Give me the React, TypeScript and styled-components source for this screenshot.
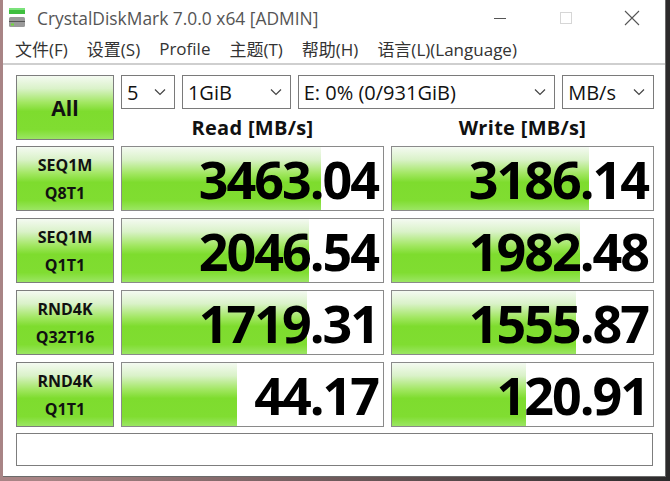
import React from 'react';
import styled, { createGlobalStyle } from 'styled-components';

interface Result {
  line1: string;
  line2: string;
  read: string;
  readFill: number;
  write: string;
  writeFill: number;
}

const results: Result[] = [
  { line1: 'SEQ1M', line2: 'Q8T1', read: '3463.04', readFill: 199, write: '3186.14', writeFill: 197 },
  { line1: 'SEQ1M', line2: 'Q1T1', read: '2046.54', readFill: 187, write: '1982.48', writeFill: 188 },
  { line1: 'RND4K', line2: 'Q32T16', read: '1719.31', readFill: 185, write: '1555.87', writeFill: 184 },
  { line1: 'RND4K', line2: 'Q1T1', read: '44.17', readFill: 115, write: '120.91', writeFill: 134 },
];

const GlobalStyle = createGlobalStyle`
  html, body {
    margin: 0;
    padding: 0;
    width: 670px;
    height: 481px;
    overflow: hidden;
    background: linear-gradient(to right, #a88485 0px, #a88485 40px, #3b3536 600px, #2c2a2b 100%);
  }
  * { box-sizing: border-box; }
`;

const green = `linear-gradient(to bottom, #f4faf1 0%, #daf2c9 20%, #a2e762 42%, #7edc2e 56%, #80dd31 85%, #9be663 100%)`;

//창 전체
const Window = styled.div`
  margin-left: 3px;
  width: 663px;
  height: 477px;
  background: #fff;
  border-right: 1px solid #6b6b6b;
  border-bottom: 1px solid #6b6b6b;
  display: flex;
  flex-direction: column;
  font-family: 'Open Sans', 'Noto Sans CJK SC', sans-serif;
`;

const TitleBar = styled.div`
  height: 35px;
  display: flex;
  align-items: center;
  padding-left: 5px;
`;

const AppIcon = styled.svg`
  width: 18px;
  height: 22px;
  margin-right: 11px;
  margin-top: 1px;
`;

const TitleText = styled.span`
  font-size: 17.4px;
  color: #555;
  flex: 1;
`;

const CaptionButton = styled.div`
  width: 66px;
  height: 35px;
  display: flex;
  align-items: center;
  justify-content: center;
`;

//메뉴 바
const MenuBar = styled.div`
  height: 27px;
  display: flex;
  align-items: center;
  padding-left: 8px;
  border-bottom: 2px solid #cfcfcf;
  box-sizing: content-box;
  padding-bottom: 1px;
`;

const MenuItem = styled.span`
  font-size: 17px;
  color: #333;
  padding: 0 4px;
  margin-right: 11px;
`;

const Client = styled.div`
  padding: 10px 12px 0 13px;
  display: flex;
  flex-direction: column;
  gap: 6px;
`;

const Grid = styled.div`
  display: grid;
  grid-template-columns: 98px 263px 263px;
  grid-auto-rows: 65px;
  column-gap: 7px;
  row-gap: 7px;
`;

const TopArea = styled.div`
  display: grid;
  grid-template-columns: 98px 263px 263px;
  grid-template-rows: 34px 31px;
  column-gap: 7px;
`;

const GreenButton = styled.div<{ $big?: boolean }>`
  border: 1px solid #7d7d7d;
  background: ${green};
  display: flex;
  flex-direction: column;
  align-items: center;
  justify-content: center;
  font-weight: 700;
  color: #111;
  font-size: ${p => (p.$big ? '21px' : '16px')};
  line-height: 28px;
  grid-row: ${p => (p.$big ? 'span 2' : 'auto')};
`;

const ComboRow = styled.div`
  grid-column: span 2;
  display: flex;
  gap: 7px;
`;

const Combo = styled.div<{ $w: number }>`
  width: ${p => p.$w}px;
  height: 34px;
  border: 1px solid #7a7a7a;
  background: #fff;
  display: flex;
  align-items: center;
  justify-content: space-between;
  padding: 0 8px 0 5px;
  font-size: 20px;
  color: #111;
`;

const Chevron = () => (
  <svg width="12" height="8" viewBox="0 0 12 8">
    <path d="M1 1.5 L6 6.5 L11 1.5" fill="none" stroke="#444" strokeWidth="1.2" />
  </svg>
);

const Header = styled.div`
  display: flex;
  align-items: center;
  justify-content: center;
  font-weight: 700;
  font-size: 20px;
  color: #111;
  letter-spacing: 0.3px;
  padding-top: 6px;
`;

const ValueCell = styled.div<{ $fill: number }>`
  border: 1px solid #8a8a8a;
  background-color: #fff;
  background-image: ${green};
  background-repeat: no-repeat;
  background-size: ${p => p.$fill}px 100%;
  display: flex;
  align-items: center;
  justify-content: flex-end;
  padding-right: 5px;
  font-weight: 700;
  font-size: 52px;
  letter-spacing: -2px;
  color: #000;
  line-height: 1;
`;

const StatusBar = styled.div`
  height: 33px;
  border: 1px solid #7d7d7d;
  background: #fff;
`;

const App = () => {
  return (
    <>
      <GlobalStyle />
      <Window>
        <TitleBar>
          <AppIcon viewBox="0 0 18 22">
            <rect x="1" y="1" width="16" height="6" fill="#3fbf3f" />
            <rect x="1" y="1" width="16" height="2" fill="#7be27b" />
            <rect x="1" y="10" width="16" height="10" rx="1.5" fill="#9a9a9a" />
            <rect x="1" y="14" width="16" height="1" fill="#555" />
            <rect x="3" y="16.5" width="3" height="2" fill="#6edb3a" />
          </AppIcon>
          <TitleText>CrystalDiskMark 7.0.0 x64 [ADMIN]</TitleText>
          <CaptionButton>
            <svg width="14" height="14" viewBox="0 0 14 14">
              <path d="M1 7.5 H13" stroke="#555" strokeWidth="1" />
            </svg>
          </CaptionButton>
          <CaptionButton>
            <svg width="14" height="14" viewBox="0 0 14 14">
              <rect x="1.5" y="1.5" width="11" height="11" fill="none" stroke="#d6d6d6" strokeWidth="1" />
            </svg>
          </CaptionButton>
          <CaptionButton>
            <svg width="16" height="16" viewBox="0 0 16 16">
              <path d="M1 1 L15 15 M15 1 L1 15" stroke="#555" strokeWidth="1.1" />
            </svg>
          </CaptionButton>
        </TitleBar>
        <MenuBar>
          <MenuItem>文件(F)</MenuItem>
          <MenuItem>设置(S)</MenuItem>
          <MenuItem>Profile</MenuItem>
          <MenuItem>主题(T)</MenuItem>
          <MenuItem>帮助(H)</MenuItem>
          <MenuItem>语言(L)(Language)</MenuItem>
        </MenuBar>
        <Client>
          <TopArea>
            <GreenButton $big>All</GreenButton>
            <ComboRow>
              <Combo $w={54}>5<Chevron /></Combo>
              <Combo $w={109}>1GiB<Chevron /></Combo>
              <Combo $w={258}>E: 0% (0/931GiB)<Chevron /></Combo>
              <Combo $w={92}>MB/s<Chevron /></Combo>
            </ComboRow>
            <Header>Read [MB/s]</Header>
            <Header>Write [MB/s]</Header>
          </TopArea>
          <Grid>
            {results.map(r => (
              <React.Fragment key={r.line2 + r.read}>
                <GreenButton>
                  <span>{r.line1}</span>
                  <span>{r.line2}</span>
                </GreenButton>
                <ValueCell $fill={r.readFill}>{r.read}</ValueCell>
                <ValueCell $fill={r.writeFill}>{r.write}</ValueCell>
              </React.Fragment>
            ))}
          </Grid>
          <StatusBar />
        </Client>
      </Window>
    </>
  );
};

export default App;
